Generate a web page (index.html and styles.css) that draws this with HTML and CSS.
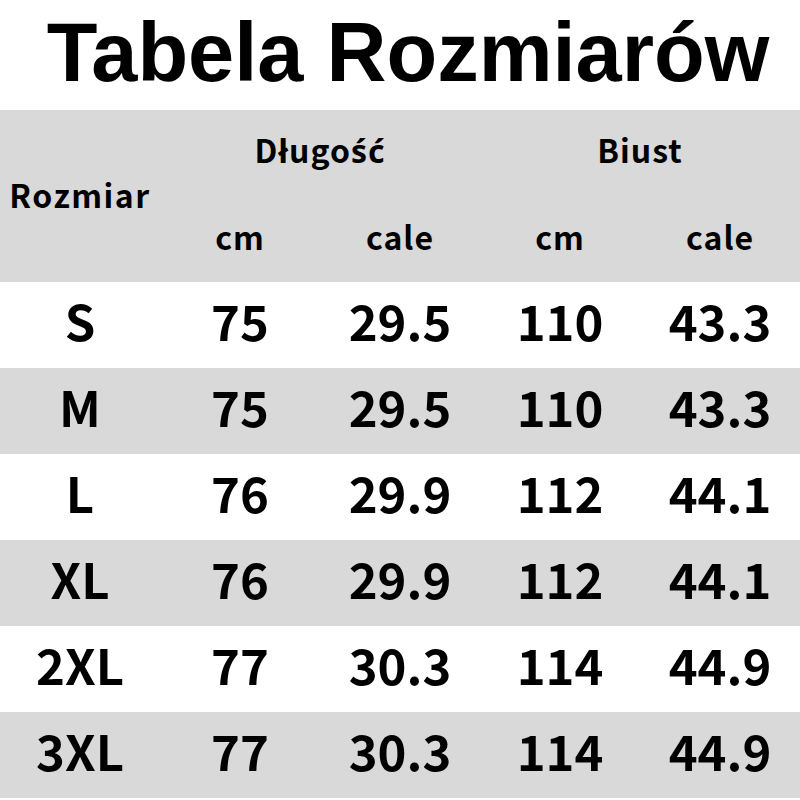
FILE: index.html
```html
<!DOCTYPE html>
<html lang="pl">
<head>
<meta charset="utf-8">
<title>Tabela Rozmiarów</title>
<link rel="stylesheet" href="styles.css">
</head>
<body>
<h1 class="title">Tabela Rozmiarów</h1>
<table class="sizes">
  <colgroup>
    <col class="col">
    <col class="col">
    <col class="col">
    <col class="col">
    <col class="col">
  </colgroup>
  <thead>
    <tr class="head-row">
      <th class="size-head" rowspan="2">Rozmiar</th>
      <th class="group" colspan="2">Długo<span class="pl">ść</span></th>
      <th class="group" colspan="2">Biust</th>
    </tr>
    <tr class="head-row">
      <th class="unit">cm</th>
      <th class="unit">cale</th>
      <th class="unit">cm</th>
      <th class="unit">cale</th>
    </tr>
  </thead>
  <tbody>
    <tr><td>S</td><td>75</td><td>29.5</td><td>110</td><td>43.3</td></tr>
    <tr class="alt"><td>M</td><td>75</td><td>29.5</td><td>110</td><td>43.3</td></tr>
    <tr><td>L</td><td>76</td><td>29.9</td><td>112</td><td>44.1</td></tr>
    <tr class="alt"><td>XL</td><td>76</td><td>29.9</td><td>112</td><td>44.1</td></tr>
    <tr><td>2XL</td><td>77</td><td>30.3</td><td>114</td><td>44.9</td></tr>
    <tr class="alt"><td>3XL</td><td>77</td><td>30.3</td><td>114</td><td>44.9</td></tr>
  </tbody>
</table>
</body>
</html>
```
FILE: styles.css
```css
html, body {
  margin: 0;
  padding: 0;
  background: #ffffff;
}
body {
  width: 800px;
  height: 800px;
  overflow: hidden;
  color: #000;
}
.title {
  margin: 0 0 3px 0;
  padding-left: 16px;
  height: 107px;
  line-height: 106px;
  font-family: "Liberation Sans", Arial, sans-serif;
  font-weight: 700;
  font-size: 83px;
  text-align: center;
  white-space: nowrap;
}
.sizes {
  width: 800px;
  border-collapse: collapse;
  table-layout: fixed;
  font-family: "Noto Sans CJK SC", "Noto Sans", sans-serif;
  font-weight: 700;
}
.sizes .col {
  width: 160px;
}
.sizes th, .sizes td {
  height: 86px;
  padding: 0;
  box-sizing: border-box;
  text-align: center;
  vertical-align: middle;
  white-space: nowrap;
}
.sizes thead {
  background: #d9d9d9;
}
.sizes th {
  font-size: 32px;
  font-weight: 700;
  letter-spacing: 1px;
  padding-bottom: 8px;
}
.sizes th.unit {
  padding-bottom: 6px;
}
.sizes th.size-head {
  padding-bottom: 4px;
  letter-spacing: 1.5px;
}
.sizes .pl {
  font-family: "Noto Sans", sans-serif;
}
.sizes td {
  font-size: 49px;
  padding-bottom: 12px;
}
.sizes tbody tr.alt {
  background: #d9d9d9;
}
```
